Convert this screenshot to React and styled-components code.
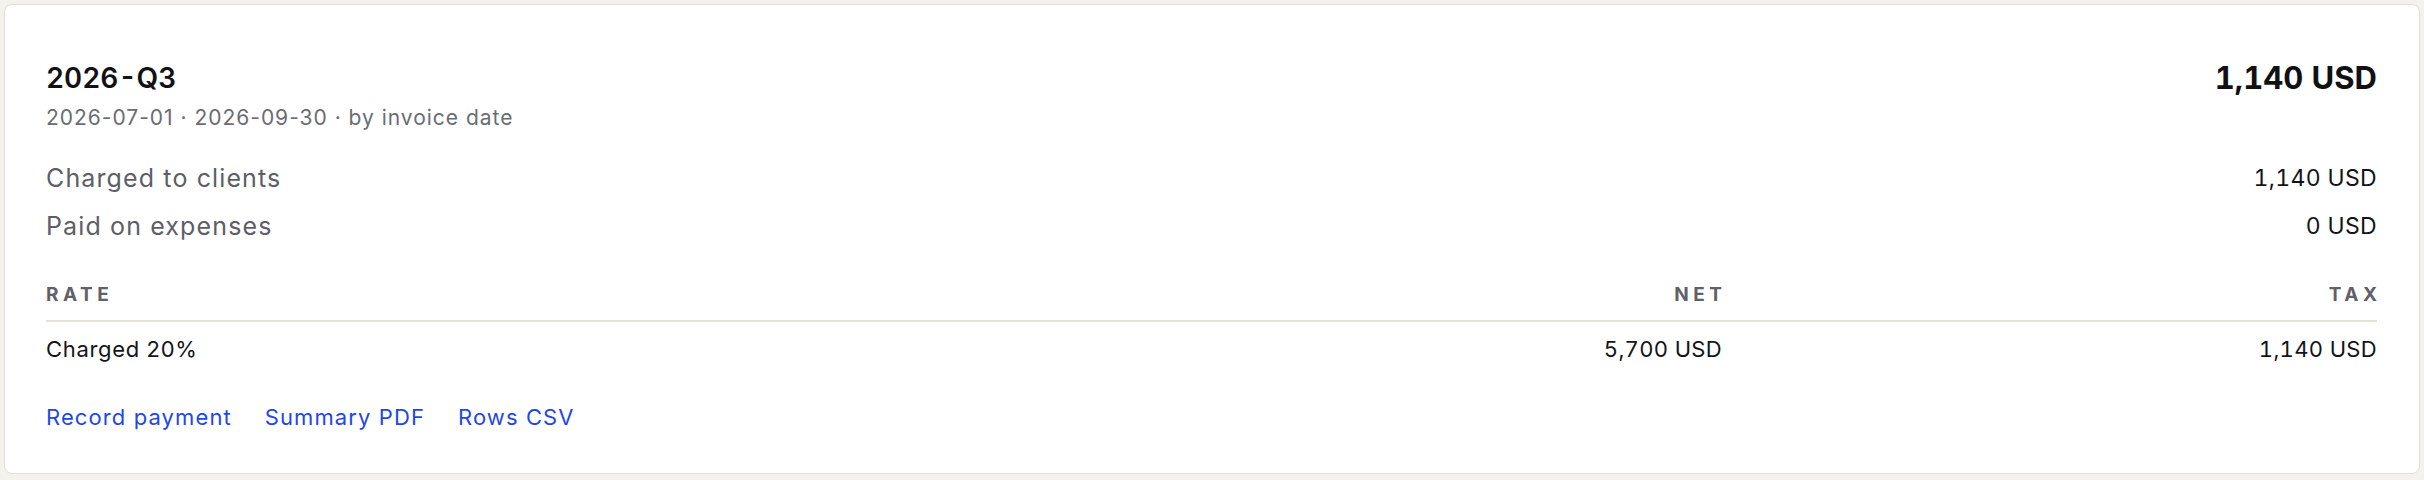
import React from "react";
import styled, { createGlobalStyle } from "styled-components";

const Global = createGlobalStyle`
  html, body { margin: 0; padding: 0; background: #f4f2ec; }
  body {
    font-family: Inter, "Noto Sans", "Liberation Sans", sans-serif;
    color: #141418;
  }
  * { box-sizing: border-box; }
`;

const Page = styled.div`
  padding: 4px;
  background: #f4f2ec;
`;

const Card = styled.section`
  background: #ffffff;
  border: 1px solid #e4e0d4;
  border-radius: 8px;
  padding: 55px 42px 42px 41px;
  display: flex;
  flex-direction: column;
`;

const Header = styled.div`
  display: flex;
  justify-content: space-between;
  align-items: flex-start;
`;

const TitleBlock = styled.div`
  display: flex;
  flex-direction: column;
  gap: 8px;
`;

const Title = styled.h2`
  margin: 0;
  font-size: 28px;
  line-height: 36px;
  font-weight: 600;
  font-variant-numeric: tabular-nums;
  color: #121216;
`;

const Sub = styled.div`
  font-size: 21px;
  line-height: 28px;
  letter-spacing: 0.047em;
  color: #6b6c74;
`;

const Total = styled.div`
  font-size: 31px;
  line-height: 36px;
  font-weight: 700;
  font-variant-numeric: tabular-nums;
  color: #111114;
`;

const Summary = styled.div`
  margin-top: 22px;
  display: flex;
  flex-direction: column;
`;

const SummaryRow = styled.div`
  display: flex;
  justify-content: space-between;
  align-items: center;
  height: 48px;
`;

const Label = styled.span`
  font-size: 25px;
  letter-spacing: 0.045em;
  color: #5d5e67;
`;

const Amount = styled.span`
  font-size: 23px;
  letter-spacing: 0.015em;
  font-variant-numeric: tabular-nums;
  color: #141418;
`;

const Table = styled.div`
  margin-top: 33px;
  display: grid;
  grid-template-columns: 1fr 600px 655px;
`;

const HeadCell = styled.div`
  padding-bottom: 13px;
  border-bottom: 2px solid #e6e2d9;
  text-align: ${(p) => (p.$right ? "right" : "left")};
`;

const HeadLabel = styled.span`
  display: inline-block;
  font-size: 19px;
  line-height: 24px;
  font-weight: 700;
  letter-spacing: 0.24em;
  text-transform: uppercase;
  color: #5f6068;
  margin-right: ${(p) => (p.$right ? "-0.24em" : "0")};
`;

const Cell = styled.div`
  font-size: 22px;
  line-height: 28px;
  letter-spacing: ${(p) => (p.$right ? "0.015em" : "0.03em")};
  font-variant-numeric: ${(p) => (p.$right ? "tabular-nums" : "normal")};
  color: #141418;
  padding-top: 13px;
  text-align: ${(p) => (p.$right ? "right" : "left")};
`;

const Actions = styled.div`
  margin-top: 40px;
  display: flex;
  gap: 33px;
`;

const ActionLink = styled.a`
  font-size: 22px;
  line-height: 28px;
  letter-spacing: 0.05em;
  color: #1f47e6;
  text-decoration: none;
  cursor: pointer;
`;

export default function App() {
  return (
    <>
      <Global />
      <Page>
        <Card>
          <Header>
            <TitleBlock>
              <Title>2026-Q3</Title>
              <Sub>2026-07-01 · 2026-09-30 · by invoice date</Sub>
            </TitleBlock>
            <Total>1,140 USD</Total>
          </Header>
          <Summary>
            <SummaryRow>
              <Label>Charged to clients</Label>
              <Amount>1,140 USD</Amount>
            </SummaryRow>
            <SummaryRow>
              <Label>Paid on expenses</Label>
              <Amount>0 USD</Amount>
            </SummaryRow>
          </Summary>
          <Table>
            <HeadCell><HeadLabel>Rate</HeadLabel></HeadCell>
            <HeadCell $right><HeadLabel $right>Net</HeadLabel></HeadCell>
            <HeadCell $right><HeadLabel $right>Tax</HeadLabel></HeadCell>
            <Cell>Charged 20%</Cell>
            <Cell $right>5,700 USD</Cell>
            <Cell $right>1,140 USD</Cell>
          </Table>
          <Actions>
            <ActionLink>Record payment</ActionLink>
            <ActionLink>Summary PDF</ActionLink>
            <ActionLink>Rows CSV</ActionLink>
          </Actions>
        </Card>
      </Page>
    </>
  );
}
